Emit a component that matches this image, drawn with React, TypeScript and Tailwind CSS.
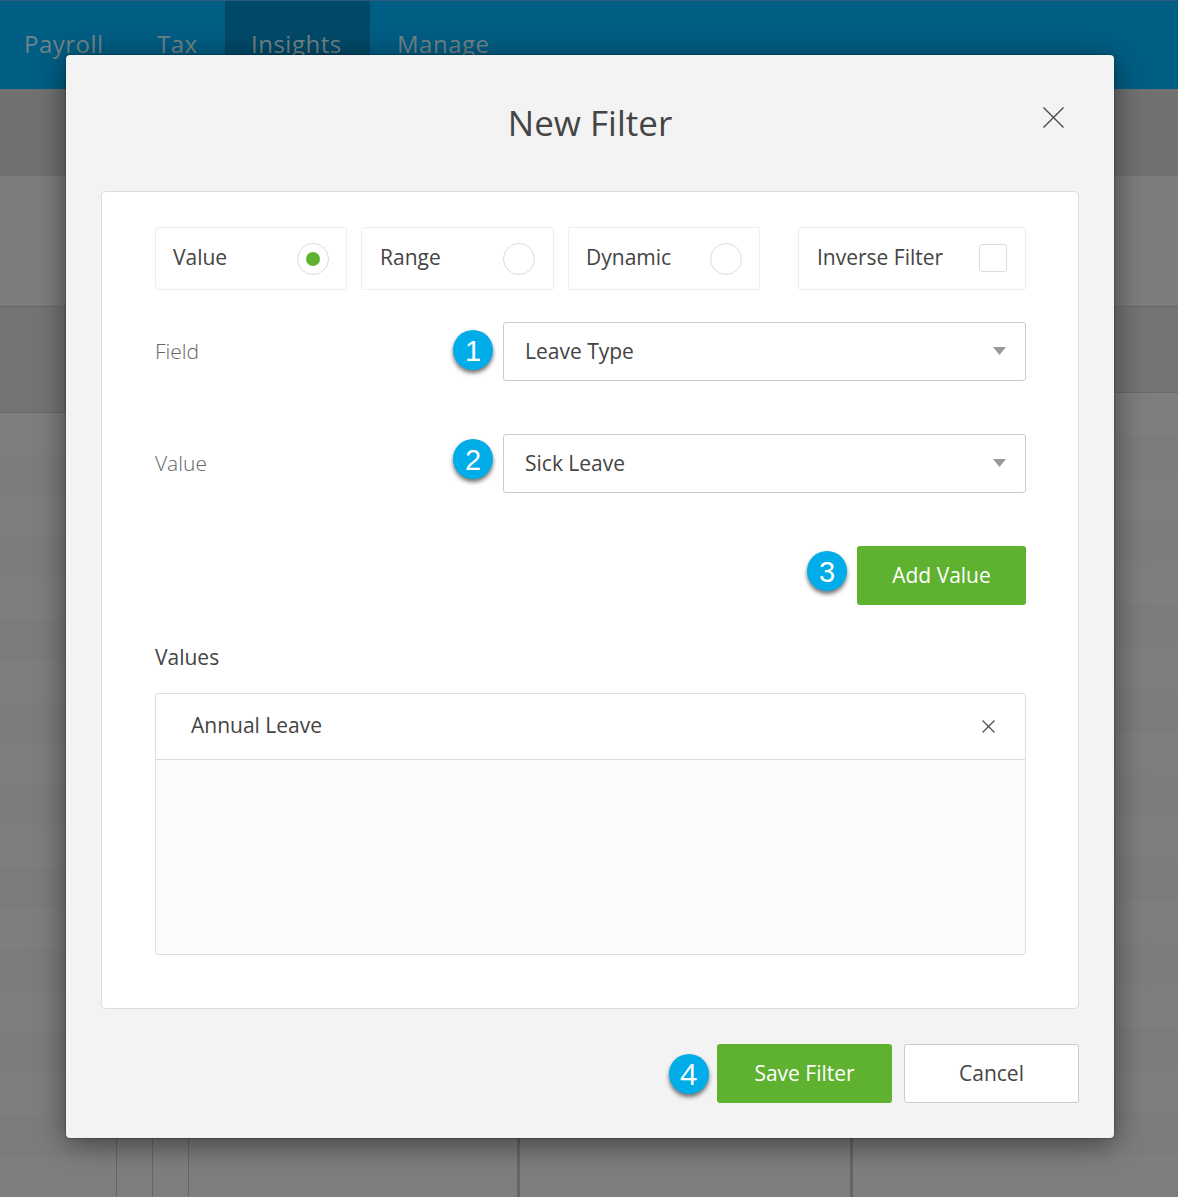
import React from "react";

function Badge({ n, className = "", arial = true }: { n: string; className?: string; arial?: boolean }) {
  return (
    <div
      className={`flex h-10 w-10 shrink-0 items-center justify-center rounded-full bg-[#00ade9] text-white shadow-[0_3px_4px_rgba(0,0,0,0.55)] ${
        arial ? "pt-[3px] font-['Liberation_Sans',sans-serif] text-[29px]" : "pb-[1px] pr-[1px] font-['Open_Sans',sans-serif] text-[30px]"
      } ${className}`}
    >
      {n}
    </div>
  );
}

function Cross({ size, stroke, className = "" }: { size: number; stroke: number; className?: string }) {
  return (
    <svg width={size} height={size} viewBox={`0 0 ${size} ${size}`} className={className}>
      <path
        d={`M0.5 0.5 L${size - 0.5} ${size - 0.5} M${size - 0.5} 0.5 L0.5 ${size - 0.5}`}
        stroke="#4a4a4a"
        strokeWidth={stroke}
        fill="none"
      />
    </svg>
  );
}

function Caret() {
  return (
    <svg width="13" height="8" viewBox="0 0 13 8" className="-mt-[1px] shrink-0">
      <path d="M0 0 H13 L6.5 8 Z" fill="#999" />
    </svg>
  );
}

function RadioOption({ label, width, checked }: { label: string; width: string; checked?: boolean }) {
  return (
    <div className={`flex h-[63px] ${width} items-center justify-between rounded-[3px] border border-[#eeeeee] px-[17px]`}>
      <span className="-mt-[2px]">{label}</span>
      <span className="flex h-8 w-8 items-center justify-center rounded-full border border-[#dddddd]">
        {checked && <span className="h-[14px] w-[14px] rounded-full bg-[#5fb130]" />}
      </span>
    </div>
  );
}

function Select({ value }: { value: string }) {
  return (
    <div className="flex h-[59px] w-[523px] items-center justify-between rounded-[3px] border border-[#cccccc] bg-white pl-[21px] pr-[19px]">
      <span>{value}</span>
      <Caret />
    </div>
  );
}

function TableRow({ cells, stripe }: { cells: string[]; stripe: boolean }) {
  return (
    <div className={`flex h-[44px] ${stripe ? "bg-[#7e7e7e]" : "bg-[#7c7c7c]"}`}>
      {cells.map((c, i) => (
        <div key={i} className={c} />
      ))}
    </div>
  );
}

const leftCells = [
  "w-[116px] shrink-0",
  "w-[36px] shrink-0 border-l border-[#666666]",
  "w-[36px] shrink-0 border-l border-[#666666]",
  "w-[329px] shrink-0 border-l border-[#666666]",
  "flex-1 border-l-[3px] border-[#666666]",
];
const rightCells = ["w-[261px] shrink-0", "flex-1 border-l-[3px] border-[#666666]"];
const rowKeys = Array.from({ length: 19 }, (_, i) => i);

export default function App() {
  return (
    <div className="relative h-[1197px] w-[1178px] overflow-hidden bg-[#7d7d7d] font-['Open_Sans',sans-serif] text-[21px] text-[#444444]">
      {/* Page beneath the dim */}
      <header className="flex h-[89px] border-t border-[#2c5a80] bg-[#005e84] pl-[24px] text-[24px] tracking-[0.5px] text-[#728489]">
        <span className="w-[133px] pt-[25px]">Payroll</span>
        <span className="w-[68px] pt-[25px]">Tax</span>
        <span className="h-full w-[145px] bg-[#004a68] pl-[26px] pt-[25px]">Insights</span>
        <span className="pl-[27px] pt-[25px]">Manage</span>
      </header>
      <div className="h-[87px] bg-[#717171]" />
      <div className="h-[130px] bg-[#7d7d7d]" />
      <div className="flex h-[891px]">
        <div className="flex w-[589px] flex-col">
          <div className="h-[107px] shrink-0 border-y border-[#696969] bg-[#747474]" />
          {rowKeys.map((i) => (
            <TableRow key={i} cells={leftCells} stripe={i % 2 === 0} />
          ))}
        </div>
        <div className="flex flex-1 flex-col">
          <div className="h-[87px] shrink-0 border-y border-[#696969] bg-[#747474]" />
          {rowKeys.map((i) => (
            <TableRow key={i} cells={rightCells} stripe={i % 2 === 0} />
          ))}
        </div>
      </div>

      {/* Modal */}
      <div className="absolute left-[66px] top-[55px] w-[1048px] rounded-[4px] bg-[#f3f3f3] px-[35px] pb-[35px] shadow-[0_5px_30px_rgba(0,0,0,0.5),0_0_2px_rgba(0,0,0,0.5)]">
        <div className="relative flex h-[136px] items-start justify-center">
          <h1 className="mt-[42px] text-[35px] leading-[52px] font-normal text-[#444444]">New Filter</h1>
          <Cross size={21} stroke={1.4} className="absolute right-[15px] top-[52px]" />
        </div>

        <div className="rounded-[4px] border border-[#dddddd] bg-white pb-[53px] pl-[53px] pr-[52px] pt-[35px]">
          <div className="flex">
            <RadioOption label="Value" width="w-[192px]" checked />
            <div className="ml-[14px]">
              <RadioOption label="Range" width="w-[193px] !px-[18px]" />
            </div>
            <div className="ml-[14px]">
              <RadioOption label="Dynamic" width="w-[192px]" />
            </div>
            <div className="ml-[38px] flex h-[63px] w-[228px] items-center justify-between rounded-[3px] border border-[#eeeeee] px-[18px]">
              <span className="-mt-[2px]">Inverse Filter</span>
              <span className="-mt-[2px] h-[28px] w-[28px] rounded-[3px] border border-[#dddddd]" />
            </div>
          </div>

          <div className="mt-[32px] flex items-center">
            <span className="font-light text-[#666666]">Field</span>
            <Badge n="1" className="ml-auto mr-[10px] -mt-[3px]" />
            <Select value="Leave Type" />
          </div>

          <div className="mt-[53px] flex items-center">
            <span className="font-light text-[#666666]">Value</span>
            <Badge n="2" className="ml-auto mr-[10px] -mt-[9px]" />
            <Select value="Sick Leave" />
          </div>

          <div className="mt-[53px] flex items-center justify-end">
            <Badge n="3" className="mr-[10px] -mt-[9px]" />
            <button className="h-[59px] w-[169px] rounded-[3px] bg-[#5fb130] text-white">Add Value</button>
          </div>

          <div className="mt-[36px] leading-[32px]">Values</div>

          <div className="mt-[20px] h-[262px] rounded-[3px] border border-[#dddddd] bg-[#fbfbfb]">
            <div className="flex h-[66px] items-center justify-between rounded-t-[3px] border-b border-[#dddddd] bg-white pl-[35px] pr-[30px]">
              <span className="-mt-[1px]">Annual Leave</span>
              <Cross size={13} stroke={1.2} />
            </div>
          </div>
        </div>

        <div className="mt-[35px] flex items-center justify-end">
          <Badge n="4" arial={false} className="mr-[8px] mt-[1px]" />
          <button className="h-[59px] w-[175px] rounded-[3px] bg-[#5fb130] text-white">Save Filter</button>
          <button className="ml-[12px] h-[59px] w-[175px] rounded-[3px] border border-[#cccccc] bg-white">Cancel</button>
        </div>
      </div>
    </div>
  );
}
